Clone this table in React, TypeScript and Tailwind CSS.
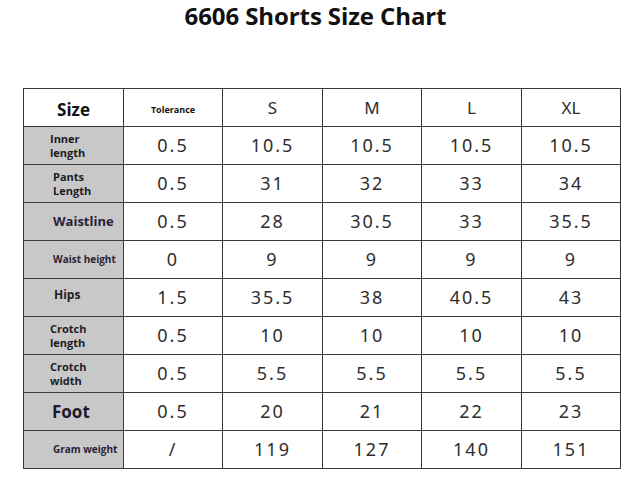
const sizes = ['S', 'M', 'L', 'XL'];

type Row = {
  label: string[];
  labelClass: string;
  tol: string;
  values: string[];
};

const rows: Row[] = [
  { label: ['Inner', 'length'], labelClass: 'pl-[26px] text-[11px] leading-[14px] text-[#1c1c24]', tol: '0.5', values: ['10.5', '10.5', '10.5', '10.5'] },
  { label: ['Pants', 'Length'], labelClass: 'pl-[29px] text-[11px] leading-[14px] text-[#1c1c24]', tol: '0.5', values: ['31', '32', '33', '34'] },
  { label: ['Waistline'], labelClass: 'pl-[29px] text-[13px] text-[#2b2238]', tol: '0.5', values: ['28', '30.5', '33', '35.5'] },
  { label: ['Waist height'], labelClass: 'pl-[29px] text-[10px] text-[#2b2238]', tol: '0', values: ['9', '9', '9', '9'] },
  { label: ['Hips'], labelClass: 'pl-[30px] text-[12px] text-[#1c1c24] pb-[6px]', tol: '1.5', values: ['35.5', '38', '40.5', '43'] },
  { label: ['Crotch', 'length'], labelClass: 'pl-[26px] text-[11px] leading-[14px] text-[#1c1c24]', tol: '0.5', values: ['10', '10', '10', '10'] },
  { label: ['Crotch', 'width'], labelClass: 'pl-[26px] text-[11px] leading-[14px] text-[#1c1c24]', tol: '0.5', values: ['5.5', '5.5', '5.5', '5.5'] },
  { label: ['Foot'], labelClass: 'pl-[28px] text-[17px] text-[#1e1a30]', tol: '0.5', values: ['20', '21', '22', '23'] },
  { label: ['Gram weight'], labelClass: 'pl-[29px] text-[10px] text-[#2b2238]', tol: '/', values: ['119', '127', '140', '151'] },
];

const cell = 'h-[38px] border-r border-b border-[#3a3a3a] flex items-center';
const num = 'justify-center text-[18px] tracking-[2px] text-[#2e2e2e] font-["Noto_Sans",sans-serif]';

export default function App() {
  return (
    <div className="w-[641px] h-[484px] bg-white font-['Open_Sans',sans-serif]">
      <h1 className="pt-[1px] pr-[10px] text-center text-[24px] font-bold text-[#111] leading-[30px] tracking-[-0.1px]">
        6606 Shorts Size Chart
      </h1>
      <div className="ml-[23px] mt-[57px] w-[598px] grid grid-cols-[100px_99px_100px_99px_100px_99px] border-l border-t border-[#3a3a3a]">
        <div className={`${cell} justify-center text-[17px] font-bold text-[#111]`}>
          <span className="mt-[4px]">Size</span>
        </div>
        <div className={`${cell} justify-center text-[9px] font-bold text-[#111]`}>
          <span className="mt-[4px]">Tolerance</span>
        </div>
        {sizes.map((s) => (
          <div key={s} className={`${cell} justify-center text-[17px] text-[#2e2e2e] font-['Noto_Sans',sans-serif]`}>
            {s}
          </div>
        ))}
        {rows.map((r) => (
          <div key={r.label.join(' ')} className="contents">
            <div className={`${cell} bg-[#c8c8c8] font-bold ${r.labelClass}`}>
              <div>
                {r.label.map((l) => (
                  <div key={l}>{l}</div>
                ))}
              </div>
            </div>
            <div className={`${cell} ${num}`}>{r.tol}</div>
            {r.values.map((v, i) => (
              <div key={i} className={`${cell} ${num}`}>
                {v}
              </div>
            ))}
          </div>
        ))}
      </div>
    </div>
  );
}
